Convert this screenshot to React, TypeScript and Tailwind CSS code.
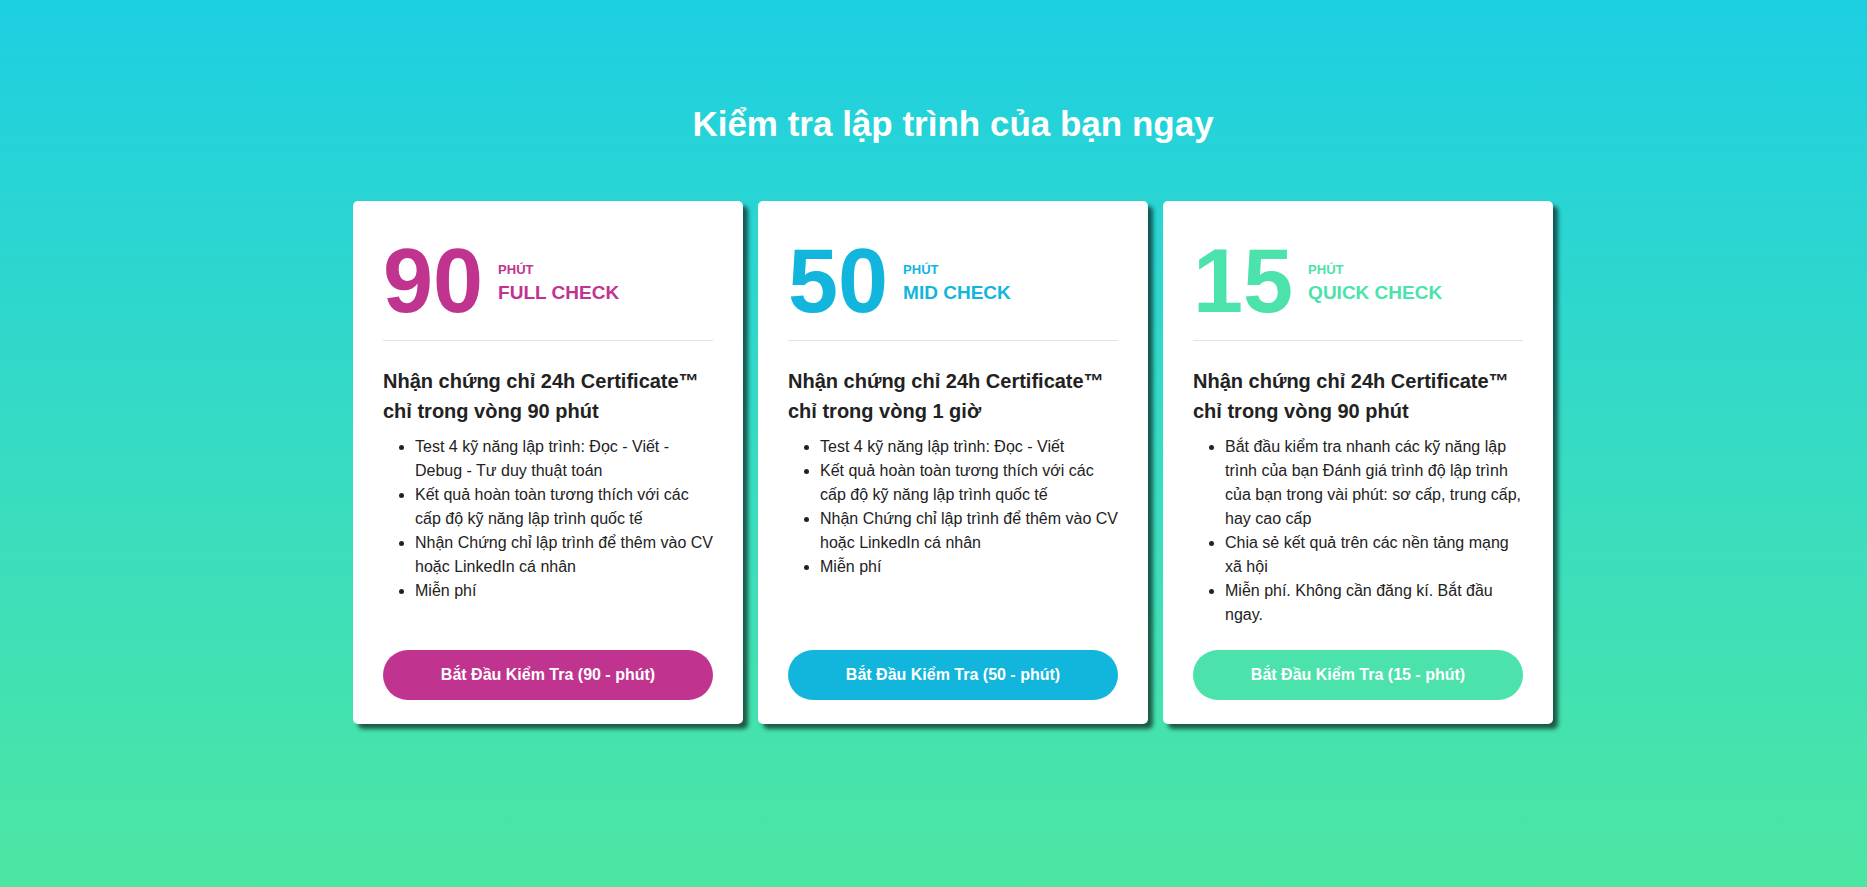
type Plan = {
  minutes: string
  name: string
  color: string
  bg: string
  heading: string
  items: string[]
}

const PLANS: Plan[] = [
  {
    minutes: "90",
    name: "FULL CHECK",
    color: "text-[#c0348f]",
    bg: "bg-[#c0348f]",
    heading: "chỉ trong vòng 90 phút",
    items: [
      "Test 4 kỹ năng lập trình: Đọc - Viết - Debug - Tư duy thuật toán",
      "Kết quả hoàn toàn tương thích với các cấp độ kỹ năng lập trình quốc tế",
      "Nhận Chứng chỉ lập trình để thêm vào CV hoặc LinkedIn cá nhân",
      "Miễn phí",
    ],
  },
  {
    minutes: "50",
    name: "MID CHECK",
    color: "text-[#12b6dd]",
    bg: "bg-[#12b6dd]",
    heading: "chỉ trong vòng 1 giờ",
    items: [
      "Test 4 kỹ năng lập trình: Đọc - Viết",
      "Kết quả hoàn toàn tương thích với các cấp độ kỹ năng lập trình quốc tế",
      "Nhận Chứng chỉ lập trình để thêm vào CV hoặc LinkedIn cá nhân",
      "Miễn phí",
    ],
  },
  {
    minutes: "15",
    name: "QUICK CHECK",
    color: "text-[#4be2ab]",
    bg: "bg-[#4be2ab]",
    heading: "chỉ trong vòng 90 phút",
    items: [
      "Bắt đầu kiểm tra nhanh các kỹ năng lập trình của bạn Đánh giá trình độ lập trình của bạn trong vài phút: sơ cấp, trung cấp, hay cao cấp",
      "Chia sẻ kết quả trên các nền tảng mạng xã hội",
      "Miễn phí. Không cần đăng kí. Bắt đầu ngay.",
    ],
  },
]

function PlanCard({ plan }: { plan: Plan }) {
  return (
    <div className="w-[390px] bg-white rounded-[5px] shadow-[5px_5px_4px_rgba(0,0,0,0.6)] flex flex-col px-[30px] pt-[30px] pb-[24px]">
      <div className="flex items-center">
        <span className={`text-[90px] leading-[100px] font-bold ${plan.color}`}>{plan.minutes}</span>
        <div className={`ml-[15px] mt-[4px] flex flex-col gap-[4px] font-bold ${plan.color}`}>
          <span className="text-[13px] leading-[16px]">PHÚT</span>
          <span className="text-[19px] leading-[22px]">{plan.name}</span>
        </div>
      </div>

      <div className="mt-[9px] h-px bg-[#e2e2e2]" />

      <h3 className="mt-[25px] text-[20px] leading-[30px] font-bold text-[#222]">
        Nhận chứng chỉ 24h Certificate™
        <br />
        {plan.heading}
      </h3>

      <ul className="mt-[9px] flex-1 list-disc pl-[32px] text-[16px] leading-[24px] text-[#222]">
        {plan.items.map((item) => (
          <li key={item}>{item}</li>
        ))}
      </ul>

      <button className={`mt-[23px] h-[50px] w-full rounded-full text-white text-[16px] font-bold ${plan.bg}`}>
        Bắt Đầu Kiểm Tra ({plan.minutes} - phút)
      </button>
    </div>
  )
}

export default function App() {
  return (
    <div className="min-h-screen bg-gradient-to-b from-[#1ccfe1] to-[#4ce6a2] font-['Liberation_Sans',Arial,sans-serif] pt-[104px] pl-[39px]">
      <h1 className="text-center text-[35px] leading-[40px] font-bold text-white">Kiểm tra lập trình của bạn ngay</h1>

      <div className="mt-[57px] flex justify-center items-stretch gap-[15px]">
        {PLANS.map((plan) => (
          <PlanCard key={plan.minutes} plan={plan} />
        ))}
      </div>
    </div>
  )
}
